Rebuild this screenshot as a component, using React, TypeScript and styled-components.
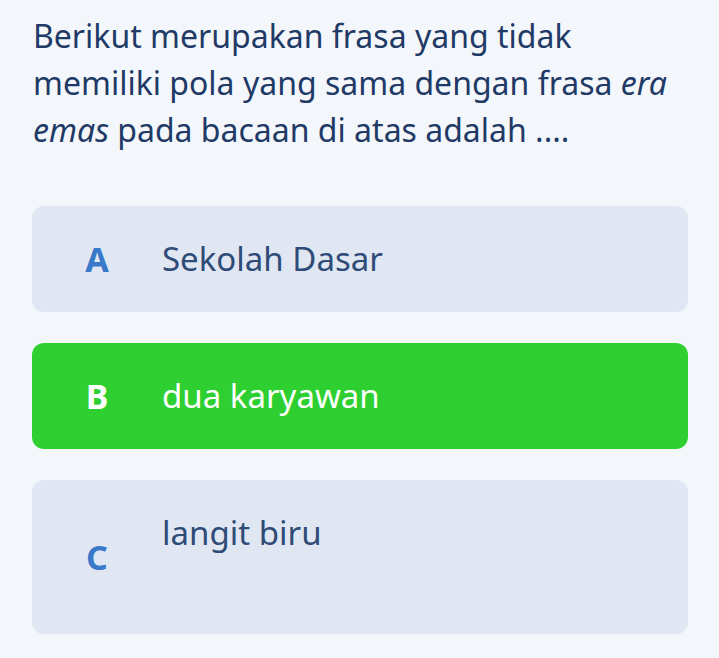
import React from "react";
import styled, { createGlobalStyle } from "styled-components";

const Global = createGlobalStyle`
  html, body { margin: 0; padding: 0; background: #f3f6fa; }
  body { font-family: "Noto Sans", "Open Sans", sans-serif; }
`;

const Page = styled.div`
  padding: 12px 30px 24px 32px;
  display: flex;
  flex-direction: column;
`;

const Question = styled.p`
  margin: 0 0 53px 1px;
  font-size: 32px;
  line-height: 47px;
  color: #1f3a66;
  em { font-style: italic; }
`;

const Options = styled.div`
  display: flex;
  flex-direction: column;
  gap: 31px;
`;

const Card = styled.div<{ $active?: boolean }>`
  display: flex;
  align-items: center;
  padding: 29px 20px 29px 0;
  border-radius: 12px;
  margin-right: 1px;
  background: ${(p) => (p.$active ? "#2ecf31" : "#e0e7f2")};
`;

const Letter = styled.div<{ $active?: boolean }>`
  width: 130px;
  flex: none;
  text-align: center;
  font-size: 34px;
  font-weight: 700;
  color: ${(p) => (p.$active ? "#ffffff" : "#3a78c9")};
`;

const Body = styled.div<{ $active?: boolean }>`
  font-size: 33px;
  line-height: 48px;
  color: ${(p) => (p.$active ? "#ffffff" : "#2f4b77")};
  p { margin: 0; }
`;

const options = [
  { key: "A", lines: ["Sekolah Dasar"] },
  { key: "B", lines: ["dua karyawan"], active: true },
  { key: "C", lines: ["langit biru", ""] },
];

export default function App() {
  return (
    <>
      <Global />
      <Page>
        <Question>
          Berikut merupakan frasa yang tidak memiliki pola yang sama dengan frasa <em>era emas</em> pada bacaan di atas adalah ....
        </Question>
        <Options>
          {options.map((o) => (
            <Card key={o.key} $active={o.active}>
              <Letter $active={o.active}>{o.key}</Letter>
              <Body $active={o.active}>
                {o.lines.map((l, i) => (
                  <p key={i}>{l || <br />}</p>
                ))}
              </Body>
            </Card>
          ))}
        </Options>
      </Page>
    </>
  );
}
